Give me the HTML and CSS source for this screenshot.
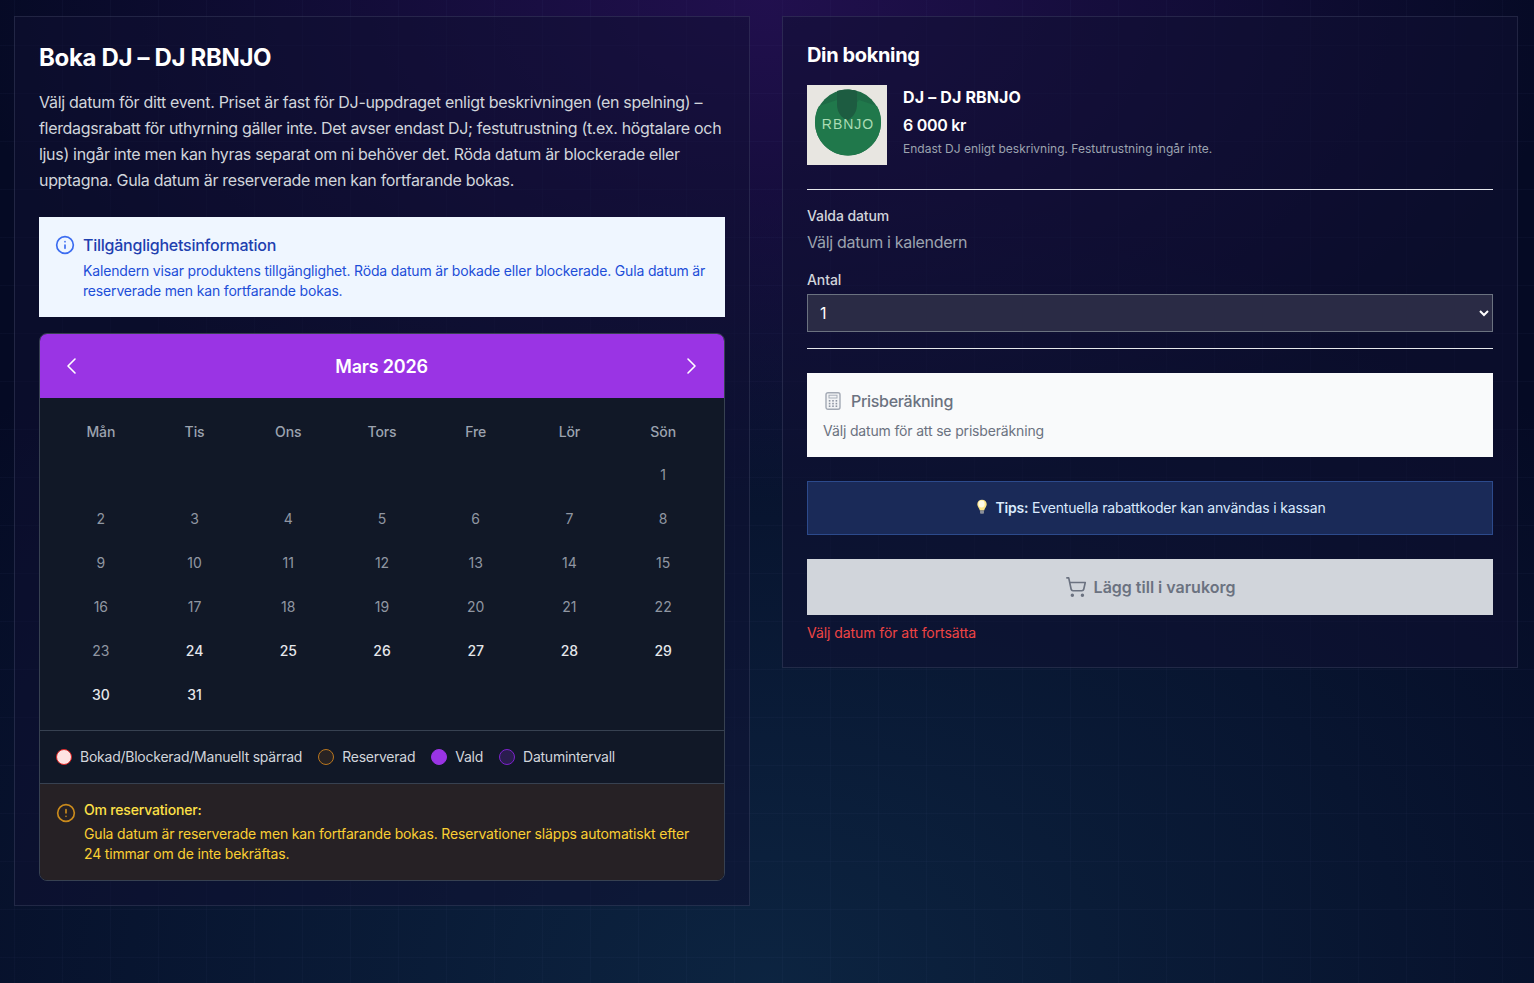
FILE: index.html
```html
<!DOCTYPE html>
<html lang="sv">
<head>
  <meta charset="utf-8">
  <title>Boka DJ</title>
  <link rel="stylesheet" href="styles.css">
</head>
<body>
  <div class="page">
    <section class="card">
      <h1 class="title">Boka DJ – DJ RBNJO</h1>
      <p class="intro">Välj datum för ditt event. Priset är fast för DJ-uppdraget enligt beskrivningen (en spelning) – flerdagsrabatt för uthyrning gäller inte. Det avser endast DJ; festutrustning (t.ex. högtalare och ljus) ingår inte men kan hyras separat om ni behöver det. Röda datum är blockerade eller upptagna. Gula datum är reserverade men kan fortfarande bokas.</p>

      <div class="info">
        <svg class="info-icon" viewBox="0 0 24 24" fill="none" stroke="currentColor" stroke-width="2" stroke-linecap="round" stroke-linejoin="round"><circle cx="12" cy="12" r="10"/><path d="M12 16v-4"/><path d="M12 8h.01"/></svg>
        <div>
          <div class="info-title">Tillgänglighetsinformation</div>
          <div class="info-text">Kalendern visar produktens tillgänglighet. Röda datum är bokade eller blockerade. Gula datum är reserverade men kan fortfarande bokas.</div>
        </div>
      </div>

      <div class="calendar">
        <div class="cal-head">
          <svg class="cal-nav" viewBox="0 0 24 24" fill="none" stroke="currentColor" stroke-width="1.600" stroke-linecap="round" stroke-linejoin="round"><path d="M15 19l-7-7 7-7"/></svg>
          <div class="cal-month">Mars 2026</div>
          <svg class="cal-nav" viewBox="0 0 24 24" fill="none" stroke="currentColor" stroke-width="1.600" stroke-linecap="round" stroke-linejoin="round"><path d="M9 5l7 7-7 7"/></svg>
        </div>
        <div class="cal-body">
          <div class="cal-grid">
            <div class="wd">Mån</div><div class="wd">Tis</div><div class="wd">Ons</div><div class="wd">Tors</div><div class="wd">Fre</div><div class="wd">Lör</div><div class="wd">Sön</div>
            <div></div><div></div><div></div><div></div><div></div><div></div><div class="day">1</div>
            <div class="day">2</div><div class="day">3</div><div class="day">4</div><div class="day">5</div><div class="day">6</div><div class="day">7</div><div class="day">8</div>
            <div class="day">9</div><div class="day">10</div><div class="day">11</div><div class="day">12</div><div class="day">13</div><div class="day">14</div><div class="day">15</div>
            <div class="day">16</div><div class="day">17</div><div class="day">18</div><div class="day">19</div><div class="day">20</div><div class="day">21</div><div class="day">22</div>
            <div class="day">23</div><div class="day open">24</div><div class="day open">25</div><div class="day open">26</div><div class="day open">27</div><div class="day open">28</div><div class="day open">29</div>
            <div class="day open">30</div><div class="day open">31</div>
          </div>
        </div>
        <div class="legend">
          <span class="legend-item"><i class="dot dot-blocked"></i>Bokad/Blockerad/Manuellt spärrad</span>
          <span class="legend-item"><i class="dot dot-reserved"></i>Reserverad</span>
          <span class="legend-item"><i class="dot dot-selected"></i>Vald</span>
          <span class="legend-item"><i class="dot dot-range"></i>Datumintervall</span>
        </div>
        <div class="notice">
          <svg class="notice-icon" viewBox="0 0 24 24" fill="none" stroke="currentColor" stroke-width="2" stroke-linecap="round" stroke-linejoin="round"><circle cx="12" cy="12" r="10"/><path d="M12 8v4"/><path d="M12 16h.01"/></svg>
          <div>
            <div class="notice-title">Om reservationer:</div>
            <div class="notice-text">Gula datum är reserverade men kan fortfarande bokas. Reservationer släpps automatiskt efter 24 timmar om de inte bekräftas.</div>
          </div>
        </div>
      </div>
    </section>

    <aside class="card card-side">
      <h2 class="side-title">Din bokning</h2>
      <div class="product">
        <svg class="logo" viewBox="0 0 80 80">
          <rect width="80" height="80" fill="#e8e6e1"/>
          <circle cx="41" cy="37.500" r="33" fill="#1e6b46"/>
          <path d="M12 21l18-6 10 14 12-14 18 6c3 5 4 11 4 16.500 0 18-15 33-33 33S8 55.500 8 37.500C8 31.500 9 26 12 21z" fill="#20784b"/>
          <path d="M30 6c6-2 14-2 20 0v13c0 6-2 9-4 12l-6 5-6-5c-2-3-4-6-4-12z" fill="#1d5c41"/>
          <text class="logo-text" x="41" y="43.500" text-anchor="middle">RBNJO</text>
        </svg>
        <div class="product-info">
          <div class="product-name">DJ – DJ RBNJO</div>
          <div class="product-price">6 000 kr</div>
          <div class="product-note">Endast DJ enligt beskrivning. Festutrustning ingår inte.</div>
        </div>
      </div>

      <div class="field-block">
        <div class="field-label">Valda datum</div>
        <div class="field-empty">Välj datum i kalendern</div>
        <label class="field-label field-label-qty" for="qty">Antal</label>
        <select id="qty" class="qty">
          <option>1</option>
        </select>
      </div>

      <div class="price-box">
        <div class="price-head">
          <svg class="price-icon" viewBox="0 0 16 18">
            <rect x="1" y="0.700" width="14" height="16.600" rx="2" fill="#f3f4f6" stroke="#a3a9b4" stroke-width="1.400"/>
            <rect x="4" y="3.200" width="8" height="2.800" fill="none" stroke="#a3a9b4" stroke-width="0.900"/>
            <g fill="#8e95a2">
              <rect x="3.800" y="8" width="1.600" height="1.600"/><rect x="7.200" y="8" width="1.600" height="1.600"/><rect x="10.600" y="8" width="1.600" height="1.600"/>
              <rect x="3.800" y="10.800" width="1.600" height="1.600"/><rect x="7.200" y="10.800" width="1.600" height="1.600"/><rect x="10.600" y="10.800" width="1.600" height="1.600"/>
              <rect x="3.800" y="13.400" width="1.600" height="1.600"/><rect x="7.200" y="13.400" width="1.600" height="1.600"/><rect x="10.600" y="13.400" width="1.600" height="1.600"/>
            </g>
          </svg>
          <span>Prisberäkning</span>
        </div>
        <div class="price-text">Välj datum för att se prisberäkning</div>
      </div>

      <div class="tip">
        <svg class="tip-icon" viewBox="0 0 14 18"><path d="M7 .5C3.600.5 1.500 3 1.500 5.800c0 2.700 2.300 4.400 3 7.200h5c.7-2.800 3-4.500 3-7.200C12.500 3 10.400.5 7 .5z" fill="#fde68a"/><ellipse cx="6.500" cy="5.500" rx="3.600" ry="4" fill="#fffbe6"/><rect x="4.700" y="13" width="4.600" height="3.800" rx="1" fill="#8b8f99"/></svg>
        <span><strong>Tips:</strong> Eventuella rabattkoder kan användas i kassan</span>
      </div>

      <button class="add-btn" disabled>
        <svg class="cart-icon" viewBox="0 0 24 24" fill="none" stroke="currentColor" stroke-width="1.800" stroke-linecap="round" stroke-linejoin="round"><circle cx="8" cy="21" r="1"/><circle cx="19" cy="21" r="1"/><path d="M2.050 2.050h2l2.660 12.420a2 2 0 0 0 2 1.580h9.780a2 2 0 0 0 1.950-1.570l1.650-7.430H5.120"/></svg>
        Lägg till i varukorg
      </button>
      <div class="add-hint">Välj datum för att fortsätta</div>
    </aside>
  </div>
</body>
</html>
```
FILE: styles.css
```css
* {
  box-sizing: border-box;
}
html, body {
  margin: 0;
  height: 100%;
}
body {
  font-family: Inter, "Liberation Sans", sans-serif;
  color: #fff;
  background-color: #050a24;
  background-image:
    linear-gradient(rgba(120, 140, 200, 0.035) 1px, transparent 1px),
    linear-gradient(90deg, rgba(120, 140, 200, 0.035) 1px, transparent 1px),
    radial-gradient(ellipse 800px 500px at 50% 0, rgba(56, 20, 112, 0.55), transparent),
    radial-gradient(ellipse 1100px 800px at 50% 100%, rgba(16, 50, 80, 0.65), transparent);
  background-size: 48px 48px, 48px 48px, 100% 100%, 100% 100%;
  background-position: 14px 45px, 14px 45px, 0 0, 0 0;
}
.page {
  display: grid;
  grid-template-columns: 736px 736px;
  column-gap: 32px;
  align-items: start;
  padding: 16px 16px 0 14px;
}
.card {
  border: 1px solid rgba(148, 163, 184, 0.16);
  background: rgba(16, 15, 50, 0.5);
  padding: 24px;
}
.title {
  margin: 1px 0 15px;
  font-size: 24px;
  line-height: 32px;
  font-weight: 700;
  letter-spacing: -0.34px;
}
.intro {
  margin: 0 0 24px;
  font-size: 16px;
  line-height: 26px;
  letter-spacing: -0.32px;
  color: #d1d5db;
}

.info {
  display: flex;
  gap: 8px;
  padding: 16px;
  background: #eff6ff;
}
.info-icon {
  flex: none;
  width: 20px;
  height: 20px;
  margin-top: 2px;
  color: #3b6cf0;
}
.info-title {
  font-size: 16px;
  line-height: 24px;
  font-weight: 500;
  letter-spacing: -0.24px;
  color: #1e40af;
}
.info-text {
  margin-top: 4px;
  font-size: 14px;
  line-height: 20px;
  letter-spacing: -0.17px;
  color: #1d4ed8;
}

.calendar {
  margin-top: 16px;
  border: 1px solid #374151;
  border-radius: 8px;
  background: #111827;
  overflow: hidden;
}
.cal-head {
  display: flex;
  align-items: center;
  justify-content: space-between;
  height: 64px;
  padding: 0 21px 0 20px;
  background: #9a34e4;
}
.cal-nav {
  width: 24px;
  height: 24px;
  color: #fff;
}
.cal-month {
  font-size: 18px;
  font-weight: 600;
  letter-spacing: -0.2px;
}
.cal-body {
  padding: 13px 14px 14px;
  border-bottom: 1px solid #374151;
}
.cal-grid {
  display: grid;
  grid-template-columns: repeat(7, 1fr);
  grid-template-rows: 41px;
  grid-auto-rows: 44px;
}
.wd, .day {
  display: flex;
  align-items: center;
  justify-content: center;
  font-size: 14px;
}
.wd {
  font-weight: 500;
  letter-spacing: -0.1px;
  color: #9ca3af;
}
.day {
  color: #9096a2;
}
.day.open {
  color: #e5e7eb;
  font-weight: 500;
}

.legend {
  display: flex;
  align-items: center;
  gap: 16px;
  height: 52px;
  padding: 0 16px;
  font-size: 14px;
  line-height: 16px;
  letter-spacing: -0.24px;
  color: #d1d5db;
}
.legend-item {
  display: flex;
  align-items: center;
  gap: 8px;
}
.dot {
  width: 16px;
  height: 16px;
  border-radius: 50%;
  border: 1px solid;
}
.dot-blocked {
  background: #fee2e2;
  border-color: #dc2626;
}
.dot-reserved {
  background: rgba(217, 119, 6, 0.12);
  border-color: #b8761f;
}
.dot-selected {
  background: #9a34e4;
  border-color: #9a34e4;
}
.dot-range {
  background: rgba(147, 51, 234, 0.2);
  border-color: #7e22ce;
}

.notice {
  display: flex;
  gap: 8px;
  padding: 16px;
  border-top: 1px solid #374151;
  background: #262125;
}
.notice-icon {
  flex: none;
  width: 20px;
  height: 20px;
  margin-top: 3px;
  color: #c98a1c;
}
.notice-title {
  font-size: 14px;
  line-height: 20px;
  font-weight: 500;
  letter-spacing: -0.18px;
  color: #fde047;
}
.notice-text {
  margin-top: 4px;
  font-size: 14px;
  line-height: 20px;
  letter-spacing: -0.17px;
  color: #fbcf33;
}

.side-title {
  margin: 0 0 16px;
  font-size: 20px;
  line-height: 28px;
  font-weight: 700;
  letter-spacing: -0.36px;
}
.product {
  display: flex;
  gap: 16px;
  padding-bottom: 24px;
  border-bottom: 1px solid #e5e7eb;
}
.logo {
  flex: none;
  width: 80px;
  height: 80px;
}
.logo-text {
  font-family: "Liberation Sans", sans-serif;
  font-size: 14px;
  letter-spacing: 1px;
  fill: #a9dcb4;
}
.product-name {
  font-size: 16px;
  line-height: 24px;
  font-weight: 700;
  letter-spacing: 0.15px;
}
.product-price {
  margin-top: 4px;
  font-size: 16px;
  line-height: 24px;
  font-weight: 600;
  letter-spacing: -0.3px;
}
.product-note {
  margin-top: 4px;
  font-size: 12px;
  line-height: 16px;
  color: #9ca3af;
}

.field-block {
  padding: 16px 0;
  border-bottom: 1px solid #e5e7eb;
}
.field-label {
  display: block;
  font-size: 14px;
  line-height: 20px;
  font-weight: 500;
  letter-spacing: -0.1px;
  color: #d1d5db;
}
.field-empty {
  margin-top: 4px;
  font-size: 16px;
  line-height: 24px;
  letter-spacing: -0.32px;
  color: #9ca3af;
}
.field-label-qty {
  margin-top: 16px;
  margin-bottom: 4px;
}
.qty {
  display: block;
  width: 100%;
  height: 38px;
  padding: 0 8px;
  border: 1px solid #6b7280;
  border-radius: 0;
  background: #2a2b45;
  color: #fff;
  font-family: inherit;
  font-size: 16px;
}

.price-box {
  margin-top: 24px;
  padding: 16px;
  background: #f9fafb;
}
.price-head {
  display: flex;
  align-items: center;
  gap: 10px;
  font-size: 16px;
  line-height: 24px;
  font-weight: 500;
  letter-spacing: -0.3px;
  color: #6b7280;
}
.price-icon {
  width: 16px;
  height: 18px;
  margin-left: 2px;
}
.price-text {
  margin-top: 8px;
  font-size: 14px;
  line-height: 20px;
  letter-spacing: -0.16px;
  color: #6b7280;
}

.tip {
  display: flex;
  align-items: center;
  justify-content: center;
  gap: 7px;
  height: 54px;
  margin-top: 24px;
  padding: 0 0 2px 2px;
  border: 1px solid #2c4a8c;
  background: #1a2a58;
  font-size: 14px;
  letter-spacing: -0.18px;
  color: #dbeafe;
}
.tip strong {
  font-weight: 600;
}
.tip-icon {
  width: 12px;
  height: 16px;
}

.add-btn {
  display: flex;
  align-items: center;
  justify-content: center;
  gap: 7px;
  width: 100%;
  height: 56px;
  margin-top: 24px;
  border: 0;
  background: #d1d5db;
  color: #6b7280;
  font-family: inherit;
  font-size: 16px;
  font-weight: 600;
}
.cart-icon {
  width: 22px;
  height: 22px;
}
.add-hint {
  margin-top: 8px;
  font-size: 14px;
  line-height: 20px;
  letter-spacing: -0.08px;
  color: #ef4444;
}
```
